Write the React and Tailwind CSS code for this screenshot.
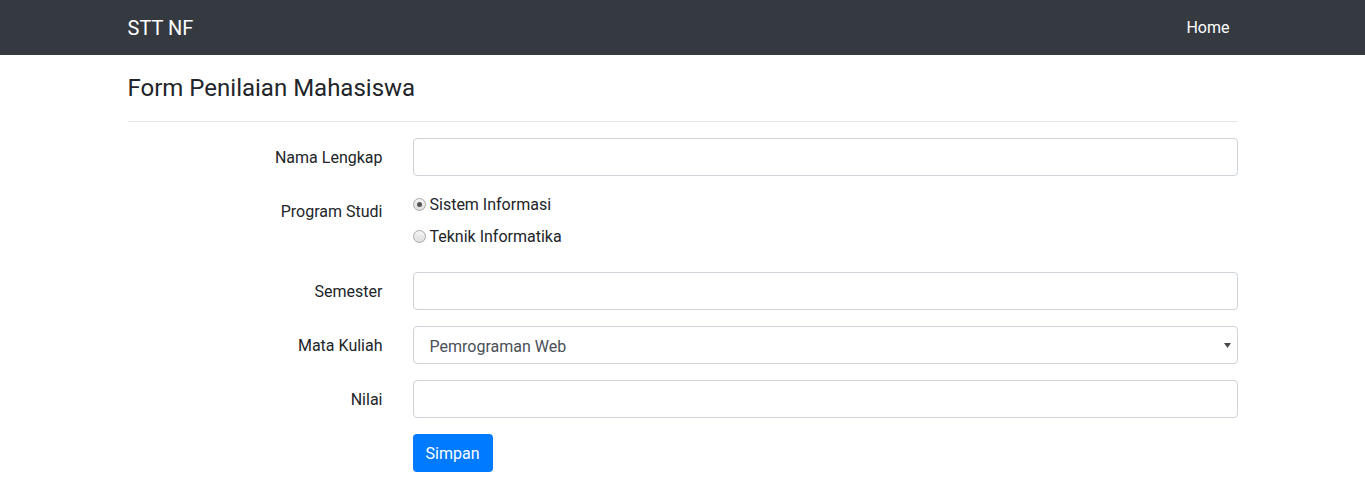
import React, { useState } from 'react';

/**
 * Form Penilaian Mahasiswa - bootstrap-ish look
 */
export default function App() {
  const [prodi, setProdi] = useState('si');

  const radios = [
    { id: 'si', label: 'Sistem Informasi' },
    { id: 'ti', label: 'Teknik Informatika' }
  ];

  const inputCls =
    'w-full h-[38px] bg-white border border-[#ced4da] rounded-[4px] px-3 text-base text-[#495057] focus:outline-none';

  return (
    <div className="min-h-screen bg-white text-[#212529] font-['Roboto',sans-serif]">
      {/* Navbar */}
      <nav className="h-[55px] bg-[#343a40]">
        <div className="max-w-[1140px] mx-auto px-[15px] h-full flex items-center justify-between pt-px">
          <span className="text-xl text-white leading-[30px]">STT NF</span>
          <a className="text-base text-white px-2 leading-6 cursor-pointer">Home</a>
        </div>
      </nav>

      <div className="max-w-[1140px] mx-auto px-[15px]">
        <h4 className="pt-[19px] text-2xl leading-[28.8px] font-normal">Form Penilaian Mahasiswa</h4>
        <hr className="mt-[18px] mb-4 border-t border-[#e6e6e6]" />

        {/* Form */}
        <div className="grid grid-cols-[255px_1fr] gap-x-[30px]">
          <label className="text-right pt-[8px] leading-6">Nama Lengkap</label>
          <div className="mb-4">
            <input type="text" className={inputCls} />
          </div>

          <label className="text-right pt-[8px] leading-6">Program Studi</label>
          <div className="mb-[15px] pt-px">
            {radios.map((r) => (
              <label key={r.id} className="flex items-center h-6 mb-2 leading-6 cursor-pointer">
                <span
                  onClick={() => setProdi(r.id)}
                  className="w-[13px] h-[13px] rounded-full border border-[#a9a9a9] bg-gradient-to-b from-[#f4f4f4] to-[#dedede] flex items-center justify-center mr-[4px]"
                >
                  {prodi === r.id && <span className="w-[5px] h-[5px] rounded-full bg-[#555]" />}
                </span>
                <span onClick={() => setProdi(r.id)}>{r.label}</span>
              </label>
            ))}
          </div>

          <label className="text-right pt-[8px] leading-6">Semester</label>
          <div className="mb-4">
            <input type="text" className={inputCls} />
          </div>

          <label className="text-right pt-[8px] leading-6">Mata Kuliah</label>
          <div className="mb-4">
            <div className="w-full h-[38px] bg-white border border-[#ced4da] rounded-[4px] pl-4 pr-[6px] flex items-center justify-between text-[#495057]">
              <span className="pt-[5px]">Pemrograman Web</span>
              <svg width="7" height="5" viewBox="0 0 7 5" className="mt-px">
                <path d="M0 0 H7 L3.5 5 Z" fill="#4a4a4a" />
              </svg>
            </div>
          </div>

          <label className="text-right pt-[8px] leading-6">Nilai</label>
          <div className="mb-4">
            <input type="text" className={inputCls} />
          </div>

          <div />
          <div>
            <button className="h-[38px] w-[80px] pt-[3px] bg-[#007bff] text-white rounded-[4px] text-base leading-6">
              Simpan
            </button>
          </div>
        </div>
      </div>
    </div>
  );
}
